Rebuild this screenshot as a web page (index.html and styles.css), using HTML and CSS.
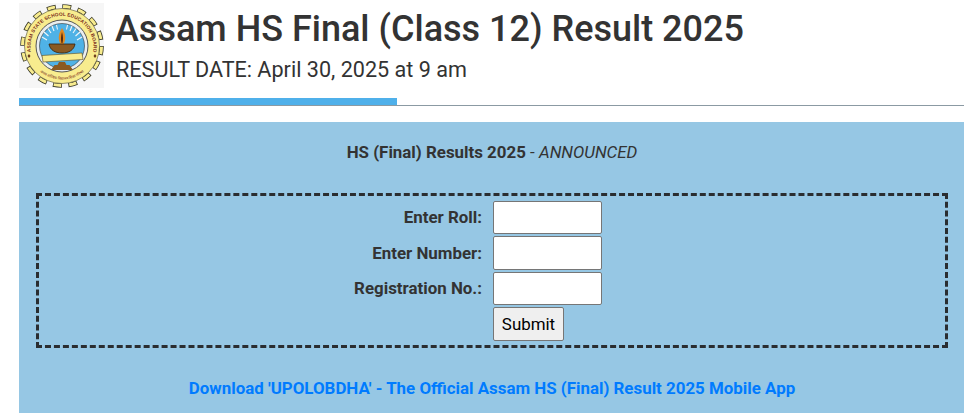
FILE: index.html
```html
<!DOCTYPE html>
<html lang="en">
<head>
<meta charset="utf-8">
<title>Assam HS Final (Class 12) Result 2025</title>
<link rel="stylesheet" href="styles.css">
</head>
<body>
<div class="page">
  <header class="head">
    <svg class="logo" viewBox="0 0 85 85" aria-label="Assam State School Education Board logo">
      <rect width="85" height="85" fill="#f6f6f6"/>
      <circle cx="43" cy="43" r="39.500" fill="none" stroke="#3a3a2a" stroke-width="4.600" stroke-dasharray="9 6.510"/>
      <circle cx="43" cy="43" r="39.500" fill="none" stroke="#f8ec8e" stroke-width="3" stroke-dasharray="7.400 8.110" stroke-dashoffset="-.8"/>
      <circle cx="43" cy="43" r="37.500" fill="#f8ec8e" stroke="#6a6648" stroke-width=".7"/>
      <defs>
        <path id="arcTop" d="M12 50 A31.500 31.500 0 1 1 74 50"/>
        <path id="arcBot" d="M15 62 A34 34 0 0 0 71 62"/>
      </defs>
      <text class="logo-top"><textPath href="#arcTop" startOffset="50%" text-anchor="middle" textLength="108" lengthAdjust="spacing">ASSAM STATE SCHOOL EDUCATION BOARD</textPath></text>
      <text class="logo-bot"><textPath href="#arcBot" startOffset="50%" text-anchor="middle">असम राज्यिक विद्यालय शिक्षा परिषद</textPath></text>
      <circle cx="43" cy="43" r="26" fill="#e9eef0" stroke="#555" stroke-width="1"/>
      <circle cx="43" cy="43" r="22.500" fill="#4fb2e6" stroke="#333" stroke-width=".6"/>
      <path d="M8.500 53 l1.500 -2 1.500 2 -1.500 2Z M74.500 53 l1.500 -2 1.500 2 -1.500 2Z" fill="#6a3a1a"/>
      <path d="M28 37 L23 34M29.500 33 L25 29M32 30 L29 25.500M35 28 L33 23M38.500 26.500 L37.500 22M47.500 26.500 L48.500 22M51 28 L53 23M54 30 L57 25.500M56.500 33 L61 29M58 37 L63 34" stroke="#f2f6f8" stroke-width="1.100" fill="none"/>
      <path d="M43 25 C39 31 39 37 41.500 41 L44.500 41 C47 37 47 31 43 25Z" fill="#e08a22"/>
      <path d="M43 29 C41.800 33 41.800 37 42.500 40 L43.500 40 C44.200 37 44.200 33 43 29Z" fill="#4a2610"/>
      <path d="M30 41 H56 C55 47 50 50 43 50 C36 50 31 47 30 41Z" fill="#8a5a22" stroke="#33220f" stroke-width=".8"/>
      <path d="M23 52.500 L63 50 L64 56.500 L24 59Z" fill="#f8ec8e" stroke="#5a4a20" stroke-width=".6"/>
      <path d="M40 59 H46 L47.500 62 H38.500Z M35.500 62 H50.500 L54 67 H32Z" fill="#8a5a22"/>
    </svg>
    <div class="titles">
      <h1 class="title">Assam HS Final (Class 12) Result 2025</h1>
      <p class="subtitle">RESULT DATE: April 30, 2025 at 9 am</p>
    </div>
  </header>
  <div class="rule"><span class="rule-bar"></span></div>
  <section class="panel">
    <p class="status"><b>HS (Final) Results 2025</b> - <i>ANNOUNCED</i></p>
    <form class="box">
      <label class="lab" for="roll">Enter Roll:</label><input class="field" id="roll" type="text">
      <label class="lab" for="num">Enter Number:</label><input class="field field-tall" id="num" type="text">
      <label class="lab" for="reg">Registration No.:</label><input class="field" id="reg" type="text">
      <span></span><button class="btn" type="button">Submit</button>
    </form>
    <a class="app" href="#">Download 'UPOLOBDHA' - The Official Assam HS (Final) Result 2025 Mobile App</a>
  </section>
</div>
</body>
</html>
```
FILE: styles.css
```css
* { box-sizing: border-box; }
html, body { margin: 0; height: 413px; overflow: hidden; background: #fff; }
body { font-family: Roboto, sans-serif; color: #333; }
.page { margin: 0 15px 0 19px; padding-top: 3px; }
.head { display: flex; gap: 11px; height: 85px; }
.logo { width: 85px; height: 85px; flex: none; }
.logo-top { font: 700 4.800px "Liberation Sans", sans-serif; fill: #7a2b1a; }
.logo-bot { font: 400 3.600px "Noto Sans", sans-serif; fill: #7a2b1a; }
.titles { min-width: 0; padding-top: 5px; }
.title { margin: 0; font-size: 36px; font-weight: 500; line-height: 43px; white-space: nowrap; }
.subtitle { margin: 6px 0 0; padding-left: 1px; font-size: 21.600px; line-height: 26px; font-weight: 400; white-space: nowrap; }
.rule { margin-top: 10px; height: 8px; border-bottom: 1px solid #8b9aa3; }
.rule-bar { display: block; width: 378px; height: 7px; background: #4fb0ea; }
.panel { margin-top: 16px; height: 300px; padding: 21px 16px 0 17px; background: #96c7e4; text-align: center; font-size: 16.900px; }
.status { margin: 0; line-height: 19px; height: 19px; }
.box { margin-top: 31px; height: 155px; padding: 5px 0 0; border: 3px dashed #2a2d30; display: grid; grid-template-columns: 443px 109px; column-gap: 11px; grid-auto-rows: min-content; row-gap: 2px; }
.lab { font-weight: 700; text-align: right; align-self: center; line-height: 19px; }
.field { width: 109px; height: 33px; padding: 1px 2px; background: #fff; border: 1px solid #767676; border-radius: 2px; }
.field-tall { height: 34px; }
.btn { justify-self: start; width: 71px; height: 34px; padding: 0; font: 400 16.900px Roboto, sans-serif; color: #000; background: #efefef; border: 1px solid #767676; border-radius: 2px; }
.app { display: block; margin-top: 31px; line-height: 19px; font-weight: 700; color: #007bff; text-decoration: none; }
```
